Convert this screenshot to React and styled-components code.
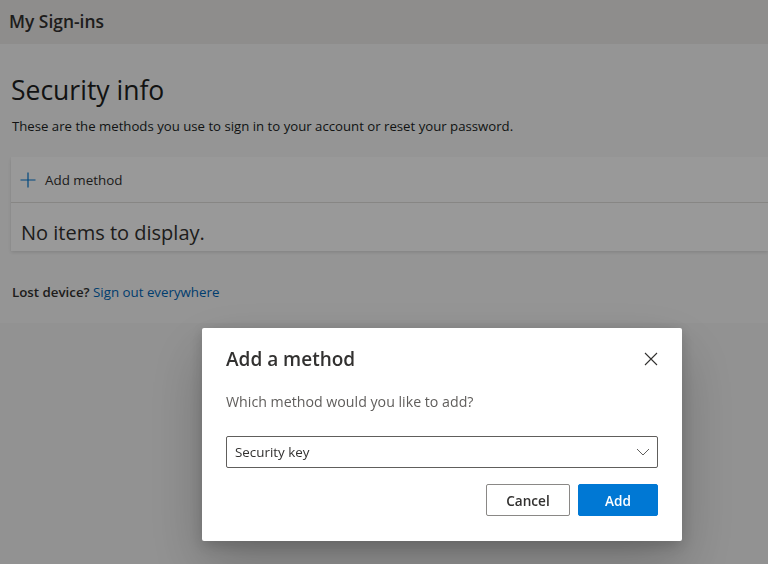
import React, { useState } from "react";
import styled, { createGlobalStyle } from "styled-components";

const GlobalStyle = createGlobalStyle`
  html, body {
    margin: 0;
    padding: 0;
    height: 100%;
  }
  body {
    font-family: "Open Sans", "Noto Sans", sans-serif;
    background: #f3f3f3;
    color: #323130;
    overflow: hidden;
  }
`;

function App() {
  const [method, setMethod] = useState("Security key");

  return (
    <Page>
      <GlobalStyle />
      <Header>
        <Brand>My Sign-ins</Brand>
      </Header>
      <Main>
        <Title>Security info</Title>
        <Intro>
          These are the methods you use to sign in to your account or reset
          your password.
        </Intro>
        <Card>
          <AddRow>
            <PlusIcon viewBox="0 0 16 16">
              <path d="M8 0.5v15M0.5 8h15" stroke="#0078d4" strokeWidth="1.2" fill="none" />
            </PlusIcon>
            Add method
          </AddRow>
          <EmptyRow>No items to display.</EmptyRow>
        </Card>
        <Lost>
          <b>Lost device?</b> <Link href="#">Sign out everywhere</Link>
        </Lost>
      </Main>

      <Overlay>
        <Dialog>
          <DialogHead>
            <DialogTitle>Add a method</DialogTitle>
            <CloseButton aria-label="Close">
              <svg width="14" height="14" viewBox="0 0 14 14">
                <path d="M1 1l12 12M13 1L1 13" stroke="#323130" strokeWidth="1.1" fill="none" />
              </svg>
            </CloseButton>
          </DialogHead>
          <Question>Which method would you like to add?</Question>
          <SelectBox>
            <span>{method}</span>
            <svg width="14" height="8" viewBox="0 0 14 8">
              <path d="M1 1l6 6 6-6" stroke="#605e5c" strokeWidth="1" fill="none" />
            </svg>
          </SelectBox>
          <Actions>
            <Button>Cancel</Button>
            <Button primary onClick={() => setMethod("Security key")}>Add</Button>
          </Actions>
        </Dialog>
      </Overlay>
    </Page>
  );
}

// Styled Components
const Page = styled.div`
  min-height: 564px;
  position: relative;
`;

const Header = styled.header`
  height: 44px;
  background: #edebe9;
  display: flex;
  align-items: center;
  padding: 0 9px;
`;

const Brand = styled.div`
  font-size: 17.4px;
  font-weight: 600;
  color: #323130;
  margin-top: -2px;
`;

const Main = styled.main`
  background: #f9f9f9;
  padding: 28px 0 22px 11px;
`;

const Title = styled.h1`
  margin: 0;
  font-size: 26.5px;
  font-weight: 400;
  line-height: 36px;
  color: #201f1e;
`;

const Intro = styled.p`
  margin: 9px 0 0 1px;
  font-size: 13.2px;
  line-height: 18px;
  color: #201f1e;
`;

const Card = styled.section`
  margin-top: 22px;
  background: #ffffff;
  box-shadow: 0 1.6px 3.6px rgba(0, 0, 0, 0.13), 0 0.3px 0.9px rgba(0, 0, 0, 0.11);
`;

const AddRow = styled.div`
  height: 45px;
  display: flex;
  align-items: center;
  gap: 9px;
  padding-left: 9px;
  font-size: 13.4px;
  color: #323130;
  border-bottom: 1px solid #e1dfdd;
`;

const PlusIcon = styled.svg`
  width: 16px;
  height: 16px;
`;

const EmptyRow = styled.div`
  padding: 18px 10px 6px;
  line-height: 24px;
  font-size: 20px;
  color: #323130;
`;

const Lost = styled.div`
  margin-top: 32px;
  margin-left: 1px;
  font-size: 13.3px;
  color: #323130;
  b {
    font-weight: 600;
  }
`;

const Link = styled.a`
  color: #0067b8;
  text-decoration: none;
`;

const Overlay = styled.div`
  position: fixed;
  inset: 0;
  background: rgba(0, 0, 0, 0.4);
`;

const Dialog = styled.div`
  position: absolute;
  left: 202px;
  top: 328px;
  width: 480px;
  height: 213px;
  box-sizing: border-box;
  background: #ffffff;
  border-radius: 2px;
  padding: 18px 24px 24px 24px;
  box-shadow: 0 25.6px 57.6px rgba(0, 0, 0, 0.22), 0 4.8px 14.4px rgba(0, 0, 0, 0.18);
`;

const DialogHead = styled.div`
  display: flex;
  justify-content: space-between;
  align-items: center;
`;

const DialogTitle = styled.h2`
  margin: 0;
  font-size: 19px;
  font-weight: 600;
  line-height: 26px;
  color: #323130;
`;

const CloseButton = styled.button`
  border: 0;
  background: none;
  padding: 0;
  margin-right: 0;
  display: flex;
  cursor: pointer;
`;

const Question = styled.p`
  margin: 20px 0 0;
  font-size: 14.2px;
  line-height: 20px;
  color: #605e5c;
`;

const SelectBox = styled.div`
  margin-top: 24px;
  height: 32px;
  box-sizing: border-box;
  border: 1px solid #605e5c;
  border-radius: 2px;
  display: flex;
  align-items: center;
  justify-content: space-between;
  padding: 0 7px 0 8px;
  font-size: 13.4px;
  color: #323130;
`;

const Actions = styled.div`
  margin-top: 16px;
  display: flex;
  justify-content: flex-end;
  gap: 8px;
`;

const Button = styled.button`
  height: 32px;
  min-width: ${(p) => (p.primary ? "80px" : "84px")};
  box-sizing: border-box;
  padding: 0 16px;
  border-radius: 2px;
  font-family: inherit;
  font-size: 13.6px;
  font-weight: 600;
  cursor: pointer;
  border: 1px solid ${(p) => (p.primary ? "#0078d4" : "#8a8886")};
  background: ${(p) => (p.primary ? "#0078d4" : "#ffffff")};
  color: ${(p) => (p.primary ? "#ffffff" : "#323130")};
`;

export default App;
